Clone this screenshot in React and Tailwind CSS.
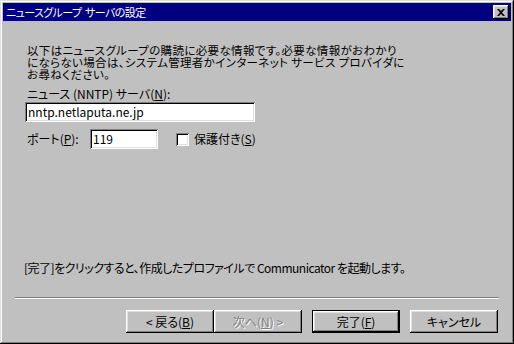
import React from 'react';

const font = {
  fontFamily: '"Noto Sans CJK JP", "Liberation Sans", sans-serif',
  fontFeatureSettings: '"palt"',
};

function Button({ children, disabled, isDefault }) {
  // 3D push button, the default one gets an extra black frame
  const base = 'w-[88px] h-[23px] flex items-center justify-center text-[12px] bg-[#c0c0c0]';
  const raised = 'shadow-[inset_-1px_-1px_#000,inset_1px_1px_#fff,inset_-2px_-2px_#808080,inset_2px_2px_#dfdfdf]';
  const framed = 'border border-black shadow-[inset_-1px_-1px_#000,inset_1px_1px_#fff,inset_-2px_-2px_#808080,inset_2px_2px_#dfdfdf]';
  return (
    <div className={`${base} ${isDefault ? framed : raised}`}>
      <span className={disabled ? 'text-[#808080] [text-shadow:1px_1px_#fff]' : 'text-black'}>{children}</span>
    </div>
  );
}

export default function App() {
  const sunken = 'bg-white shadow-[inset_1px_1px_#808080,inset_-1px_-1px_#fff,inset_2px_2px_#000,inset_-2px_-2px_#dfdfdf]';
  return (
    <div style={font} className="w-[514px] h-[344px] bg-[#c0c0c0] p-[3px] flex flex-col text-black select-none shadow-[inset_-1px_-1px_#000,inset_1px_1px_#dfdfdf,inset_-2px_-2px_#808080,inset_2px_2px_#fff]">
      {/* TITLE BAR */}
      <div className="h-[18px] bg-[#000080] flex items-center justify-between pl-[3px] pr-[2px]">
        <span className="text-white text-[11px] leading-[12px] tracking-[-0.6px] whitespace-pre">ニュースグループ  サーバの設定</span>
        <div className="w-[16px] h-[14px] bg-[#c0c0c0] flex items-center justify-center shadow-[inset_-1px_-1px_#000,inset_1px_1px_#fff,inset_-2px_-2px_#808080,inset_2px_2px_#dfdfdf]">
          <svg width="8" height="7" viewBox="0 0 8 7">
            <path d="M0 0h2l2 2 2-2h2L5 3.5 8 7H6L4 5 2 7H0l3-3.5z" fill="#000" />
          </svg>
        </div>
      </div>

      {/* BODY */}
      <div className="pl-[24px] pt-[23px] text-[12px] leading-[12px]">
        <p className="text-[11.5px] tracking-[0.35px]">
          以下はニュースグループの購読に必要な情報です。必要な情報がおわかり<br />
          にならない場合は、システム管理者かインターネット サービス プロバイダに<br />
          お尋ねください。
        </p>

        <div className="mt-[8px]">ニュース (NNTP) サーバ(<u>N</u>):</div>
        <div className={`mt-[2px] -ml-[2px] w-[230px] h-[20px] flex items-center pl-[3px] ${sunken}`}>
          nntp.netlaputa.ne.jp
        </div>

        <div className="mt-[7px] flex items-center h-[20px]">
          <span className="w-[63px]">ポート(<u>P</u>):</span>
          <div className={`w-[68px] h-[20px] flex items-center pl-[3px] ${sunken}`}>119</div>
          <div className={`ml-[18px] w-[13px] h-[13px] ${sunken}`} />
          <span className="ml-[5px]">保護付き(<u>S</u>)</span>
        </div>

        <div className="mt-[113px] -ml-[3px] tracking-[-0.5px]">
          [完了]をクリックすると、作成したプロファイルで Communicator を起動します。
        </div>
      </div>

      {/* SEPARATOR */}
      <div className="mt-[23px] ml-[12px] w-[484px] h-[2px] border-t border-[#808080] border-b border-b-white" />

      {/* BUTTONS */}
      <div className="mt-[11px] ml-[123px] flex">
        <Button>&lt; 戻る(<u>B</u>)</Button>
        <Button disabled>次へ(<u>N</u>) &gt;</Button>
        <div className="ml-[10px]">
          <Button isDefault>完了(<u>F</u>)</Button>
        </div>
        <div className="ml-[10px]">
          <Button>キャンセル</Button>
        </div>
      </div>
    </div>
  );
}
